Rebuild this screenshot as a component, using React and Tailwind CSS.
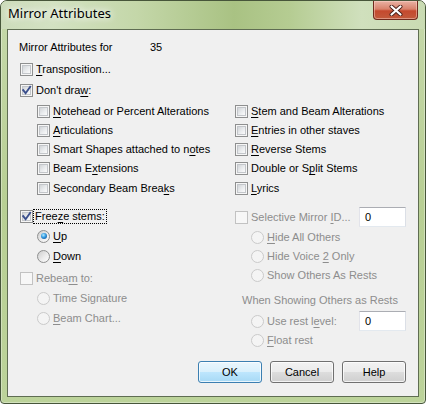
import React from "react";

function Acc({ text, u }) {
  if (u == null || u < 0) return <>{text}</>;
  return (
    <>
      {text.slice(0, u)}
      <span className="underline underline-offset-[2px] decoration-[1px]">{text[u]}</span>
      {text.slice(u + 1)}
    </>
  );
}

function Check({ checked, disabled }) {
  return (
    <span
      className={`relative flex h-[13px] w-[13px] shrink-0 items-center justify-center border ${
        disabled ? "border-[#c2c2c2] bg-[#f7f7f7]" : "border-[#8e8f8f] bg-[#f6f6f6]"
      }`}
    >
      {!disabled && (
        <span className="h-[9px] w-[9px] border border-[#c3c6ca] bg-[linear-gradient(135deg,#d2d5d8_0%,#eaecee_55%,#fbfbfb_100%)]" />
      )}
      {checked && (
        <svg className="absolute left-0 top-0" width="11" height="11" viewBox="0 0 11 11">
          <path d="M2.2 5.2 L4.6 8.2 L9.2 1.8" fill="none" stroke="#3b4f8c" strokeWidth="1.9" strokeLinecap="square" />
        </svg>
      )}
    </span>
  );
}

function Radio({ checked, disabled }) {
  return (
    <span
      className={`flex h-[13px] w-[13px] shrink-0 items-center justify-center rounded-full border ${
        disabled
          ? "border-[#cacaca] bg-[#f4f4f4]"
          : "border-[#8e8f8f] bg-[linear-gradient(135deg,#cdcdcd_0%,#ececec_55%,#fcfcfc_100%)]"
      }`}
    >
      {checked && (
        <span className="h-[6px] w-[6px] rounded-full bg-[radial-gradient(circle_at_40%_35%,#b5ecff_0%,#3198e0_45%,#0f3f7d_100%)]" />
      )}
    </span>
  );
}

function CheckRow({ text, u, checked, disabled, className = "" }) {
  return (
    <div className={`flex items-center ${className}`}>
      <Check checked={checked} disabled={disabled} />
      <span className={`ml-[3px] whitespace-nowrap ${disabled ? "text-[#8d8d8d]" : ""}`}>
        <Acc text={text} u={u} />
      </span>
    </div>
  );
}

function RadioRow({ text, u, checked, disabled, className = "" }) {
  return (
    <div className={`flex items-center ${className}`}>
      <Radio checked={checked} disabled={disabled} />
      <span className={`ml-[3px] whitespace-nowrap ${disabled ? "text-[#8d8d8d]" : ""}`}>
        <Acc text={text} u={u} />
      </span>
    </div>
  );
}

function TextBox({ value }) {
  return (
    <div className="flex h-[20px] w-[47px] shrink-0 items-center border border-[#abadb3] border-l-[#e2e3ea] border-r-[#dbdfe6] border-b-[#e3e9ef] bg-white pl-[5px]">
      {value}
    </div>
  );
}

function Btn({ children, primary }) {
  return (
    <div
      className={`flex h-[22px] w-[64px] items-center justify-center rounded-[3px] border shadow-[inset_0_0_0_1px_rgba(255,255,255,0.75)] ${
        primary
          ? "border-[#3c7fb1] bg-[linear-gradient(to_bottom,#eaf6fd_0%,#d9f0fc_50%,#bee6fd_50%,#a7d9f5_100%)]"
          : "border-[#707070] bg-[linear-gradient(to_bottom,#f2f2f2_0%,#ebebeb_50%,#dddddd_50%,#cfcfcf_100%)]"
      }`}
    >
      {children}
    </div>
  );
}

export default function App() {
  return (
    <div className="h-[404px] w-[426px] bg-white">
      <div className="relative flex h-[404px] w-[426px] flex-col overflow-hidden rounded-t-[7px] rounded-b-[4px] border border-[#47563a] bg-[linear-gradient(to_bottom,#c6d9ab_0%,#b8cf94_50%,#bcd39a_100%)] shadow-[inset_0_0_0_1px_rgba(255,255,255,0.35)]">
        <div className="flex h-[28px] shrink-0 items-center bg-[linear-gradient(90deg,#cddcbb_0%,#d3e2c2_12%,#c4d7a9_32%,#a9c283_55%,#b5cc92_68%,#d0e0bd_85%,#c9dbb2_100%)] pl-[7px] pb-[2px] font-['Noto_Sans',sans-serif] text-[13px] text-black">
          <span className="[text-shadow:0_0_6px_#ffffff,0_0_10px_#ffffff]">Mirror Attributes</span>
        </div>

        <div className="absolute left-[372px] top-0 flex h-[19px] w-[45px] items-center justify-center rounded-b-[4px] border border-t-0 border-[#6f2a1d] bg-[linear-gradient(to_bottom,#e9b2a4_0%,#d8826c_45%,#c4492e_55%,#c25a3c_100%)] shadow-[inset_0_0_0_1px_rgba(255,220,210,0.45)]">
          <svg width="14" height="11" viewBox="0 0 14 11">
            <path d="M2.5 1.5 L11.5 9.5 M11.5 1.5 L2.5 9.5" stroke="#4a2018" strokeWidth="4" strokeLinecap="round" />
            <path d="M2.5 1.5 L11.5 9.5 M11.5 1.5 L2.5 9.5" stroke="#ffffff" strokeWidth="2.2" strokeLinecap="round" />
          </svg>
        </div>

        <div className="mx-[6px] mb-[6px] flex flex-1 flex-col border border-[#5f6d52] bg-[#f0f0f0] pt-[7px] font-['Liberation_Sans',Arial,sans-serif] text-[11px] leading-none text-black">
          <div className="flex h-[20px] items-center">
            <span className="ml-[11px] w-[131px]">Mirror Attributes for</span>
            <span>35</span>
          </div>
          <CheckRow className="ml-[12px] mt-[2px] h-[20px]" text="Transposition..." u={0} />
          <CheckRow className="ml-[12px] mt-[1px] h-[20px]" text="Don't draw:" u={9} checked />

          <div className="mt-[1.5px] grid grid-cols-[198px_1fr] auto-rows-[19.25px] pl-[29px]">
            <CheckRow text="Notehead or Percent Alterations" u={0} />
            <CheckRow text="Stem and Beam Alterations" u={0} />
            <CheckRow text="Articulations" u={0} />
            <CheckRow text="Entries in other staves" u={0} />
            <CheckRow text="Smart Shapes attached to notes" u={26} />
            <CheckRow text="Reverse Stems" u={0} />
            <CheckRow text="Beam Extensions" u={6} />
            <CheckRow text="Double or Split Stems" u={11} />
            <CheckRow text="Secondary Beam Breaks" u={19} />
            <CheckRow text="Lyrics" u={0} />
          </div>

          <div className="mt-[8.25px] flex">
            <div className="flex w-[227px] flex-col pl-[12px]">
              <div className="flex h-[20px] items-center">
                <Check checked />
                <span className="flex h-[15px] items-center border border-dotted border-black px-[1px]">
                  <Acc text="Freeze stems:" u={4} />
                </span>
              </div>
              <RadioRow className="ml-[17px] h-[20px]" text="Up" u={0} checked />
              <RadioRow className="ml-[17px] h-[20px]" text="Down" u={0} />
              <CheckRow className="h-[24px]" text="Rebeam to:" u={5} disabled />
              <RadioRow className="ml-[17px] h-[16px]" text="Time Signature" disabled />
              <RadioRow className="ml-[17px] h-[24px]" text="Beam Chart..." u={0} disabled />
            </div>

            <div className="flex w-[171px] flex-col">
              <div className="flex h-[22px] items-center justify-between">
                <CheckRow text="Selective Mirror ID..." u={17} disabled />
                <TextBox value="0" />
              </div>
              <RadioRow className="ml-[16px] h-[18px]" text="Hide All Others" u={0} disabled />
              <RadioRow className="ml-[16px] h-[20px]" text="Hide Voice 2 Only" u={11} disabled />
              <RadioRow className="ml-[16px] h-[18px]" text="Show Others As Rests" disabled />
              <div className="flex h-[27px] items-center pl-[7px] pt-[5px] text-[#8d8d8d]">When Showing Others as Rests</div>
              <div className="flex h-[20px] items-center justify-between">
                <RadioRow className="ml-[16px]" text="Use rest level:" u={10} disabled />
                <TextBox value="0" />
              </div>
              <RadioRow className="ml-[16px] h-[18px]" text="Float rest" u={0} disabled />
            </div>
          </div>

          <div className="mt-[12px] flex justify-end gap-[8px] pr-[12px]">
            <Btn primary>OK</Btn>
            <Btn>Cancel</Btn>
            <Btn>Help</Btn>
          </div>
        </div>
      </div>
    </div>
  );
}
